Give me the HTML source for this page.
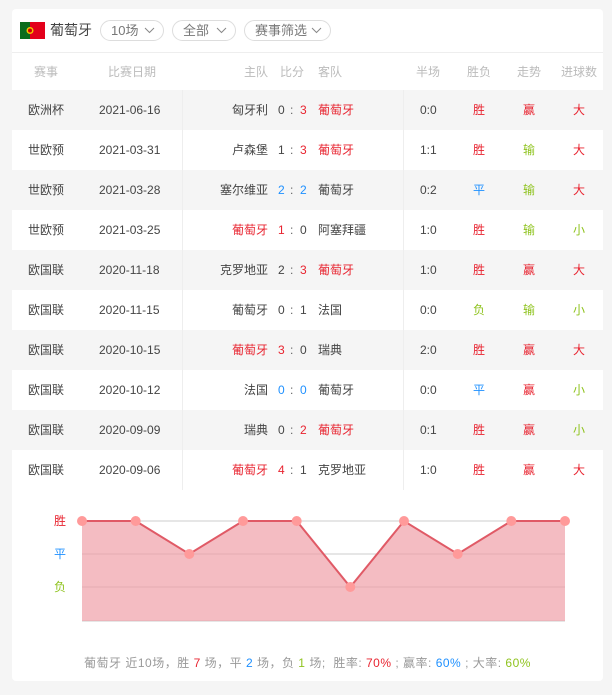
<!DOCTYPE html><html><head><meta charset="utf-8"><style>
*{margin:0;padding:0;box-sizing:border-box}
body{width:612px;height:695px;background:#f5f5f5;font-family:"Liberation Sans","Noto Sans CJK SC",sans-serif;font-size:12px;color:#444;position:relative;overflow:hidden}
.card{position:absolute;left:12px;top:9px;width:591px;height:672px;background:#fff;border-radius:4px}
.a{position:absolute;white-space:nowrap}
.pill{position:absolute;top:11px;height:21px;border:1px solid #ddd;border-radius:11px;color:#777;font-size:13px;line-height:19px;padding-left:10px}
.pill svg{position:absolute;right:8px;top:6px}
.row{position:absolute;left:0;width:591px;height:40px;line-height:40px;font-size:12px}
.g{background:#f5f5f5}
.r{color:#e8232f}.b{color:#1e90ff}.gr{color:#8fc31f}
.hd{color:#bbb;font-size:12px;line-height:38px}
</style></head><body>
<div class="card">
<svg class="a" style="left:8px;top:13px" width="25" height="17"><rect width="10" height="17" fill="#0a6b1c"/><rect x="10" width="15" height="17" fill="#e3001b"/><circle cx="10" cy="8.5" r="3.5" fill="#f5c400"/><circle cx="10" cy="8.5" r="2" fill="#c00"/></svg>
<div class="a" style="left:38px;top:11px;font-size:14px;color:#444;line-height:21px">葡萄牙</div>
<div class="pill" style="left:88px;width:64px">10场<svg width="11" height="7"><path d="M1 1L5.5 5.5L10 1" stroke="#888" fill="none"/></svg></div>
<div class="pill" style="left:160px;width:64px">全部<svg width="11" height="7"><path d="M1 1L5.5 5.5L10 1" stroke="#888" fill="none"/></svg></div>
<div class="pill" style="left:232px;width:87px">赛事筛选<svg width="11" height="7"><path d="M1 1L5.5 5.5L10 1" stroke="#888" fill="none"/></svg></div>
<div class="a" style="left:0;top:43px;width:591px;height:1px;background:#eee"></div>
<div class="row hd" style="top:44px">
<span class="a" style="left:22px">赛事</span><span class="a" style="left:96px">比赛日期</span><span class="a" style="left:232px">主队</span><span class="a" style="left:268px">比分</span><span class="a" style="left:306px">客队</span><span class="a" style="left:404px">半场</span><span class="a" style="left:455px">胜负</span><span class="a" style="left:505px">走势</span><span class="a" style="left:549px">进球数</span></div>
<div id="rows"></div>
<div class="a" style="left:170px;top:81px;width:1px;height:400px;background:#eee"></div>
<div class="a" style="left:391px;top:81px;width:1px;height:400px;background:#eee"></div>
<svg class="a" style="left:0;top:481px" width="591" height="191">
<text x="42" y="35" font-size="12" fill="#e8232f" font-family="Liberation Sans,Noto Sans CJK SC,sans-serif">胜</text>
<text x="42" y="68" font-size="12" fill="#1e90ff" font-family="Liberation Sans,Noto Sans CJK SC,sans-serif">平</text>
<text x="42" y="101" font-size="12" fill="#8fc31f" font-family="Liberation Sans,Noto Sans CJK SC,sans-serif">负</text>
<line x1="70" y1="31" x2="553" y2="31" stroke="#ccc"/><line x1="70" y1="64" x2="553" y2="64" stroke="#ccc"/><line x1="70" y1="97" x2="553" y2="97" stroke="#ccc"/><line x1="70" y1="131" x2="553" y2="131" stroke="#ccc"/>
<polygon points="70,31 123.7,31 177.3,64 231,31 284.7,31 338.3,97 392,31 445.7,64 499.3,31 553,31 553,131 70,131" fill="#f0a0a8" fill-opacity="0.7"/>
<polyline points="70,31 123.7,31 177.3,64 231,31 284.7,31 338.3,97 392,31 445.7,64 499.3,31 553,31" fill="none" stroke="#e05a66" stroke-width="2"/>
<g fill="#ff9a9a"><circle cx="70" cy="31" r="5"/><circle cx="123.7" cy="31" r="5"/><circle cx="177.3" cy="64" r="5"/><circle cx="231" cy="31" r="5"/><circle cx="284.7" cy="31" r="5"/><circle cx="338.3" cy="97" r="5"/><circle cx="392" cy="31" r="5"/><circle cx="445.7" cy="64" r="5"/><circle cx="499.3" cy="31" r="5"/><circle cx="553" cy="31" r="5"/></g>
</svg>
<div class="a" style="left:0;width:591px;top:645px;text-align:center;color:#999;font-size:12px;letter-spacing:0.5px">葡萄牙 近10场，胜 <span class="r">7</span> 场，平 <span class="b">2</span> 场，负 <span class="gr">1</span> 场;&nbsp; 胜率: <span class="r">70%</span> ; 赢率: <span class="b">60%</span> ; 大率: <span class="gr">60%</span></div>
</div>
<script>
var d=[["欧洲杯","2021-06-16","匈牙利","","0","","3","r","葡萄牙","r","0:0","胜","r","赢","r","大","r"],
["世欧预","2021-03-31","卢森堡","","1","","3","r","葡萄牙","r","1:1","胜","r","输","gr","大","r"],
["世欧预","2021-03-28","塞尔维亚","","2","b","2","b","葡萄牙","","0:2","平","b","输","gr","大","r"],
["世欧预","2021-03-25","葡萄牙","r","1","r","0","","阿塞拜疆","","1:0","胜","r","输","gr","小","gr"],
["欧国联","2020-11-18","克罗地亚","","2","","3","r","葡萄牙","r","1:0","胜","r","赢","r","大","r"],
["欧国联","2020-11-15","葡萄牙","","0","","1","","法国","","0:0","负","gr","输","gr","小","gr"],
["欧国联","2020-10-15","葡萄牙","r","3","r","0","","瑞典","","2:0","胜","r","赢","r","大","r"],
["欧国联","2020-10-12","法国","","0","b","0","b","葡萄牙","","0:0","平","b","赢","r","小","gr"],
["欧国联","2020-09-09","瑞典","","0","","2","r","葡萄牙","r","0:1","胜","r","赢","r","小","gr"],
["欧国联","2020-09-06","葡萄牙","r","4","r","1","","克罗地亚","","1:0","胜","r","赢","r","大","r"]];
var h="";d.forEach(function(x,i){h+='<div class="row'+(i%2==0?' g':'')+'" style="top:'+(81+i*40)+'px"><span class="a" style="left:16px">'+x[0]+'</span><span class="a" style="left:87px">'+x[1]+'</span><span class="a '+x[3]+'" style="right:335px">'+x[2]+'</span><span class="a '+x[5]+'" style="left:266px">'+x[4]+'</span><span class="a" style="left:278px;color:#666">:</span><span class="a '+x[7]+'" style="left:288px">'+x[6]+'</span><span class="a '+x[9]+'" style="left:306px">'+x[8]+'</span><span class="a" style="left:408px">'+x[10]+'</span><span class="a '+x[12]+'" style="left:461px">'+x[11]+'</span><span class="a '+x[14]+'" style="left:511px">'+x[13]+'</span><span class="a '+x[16]+'" style="left:561px">'+x[15]+'</span></div>'});
document.getElementById("rows").outerHTML=h;
</script>
</body></html>
